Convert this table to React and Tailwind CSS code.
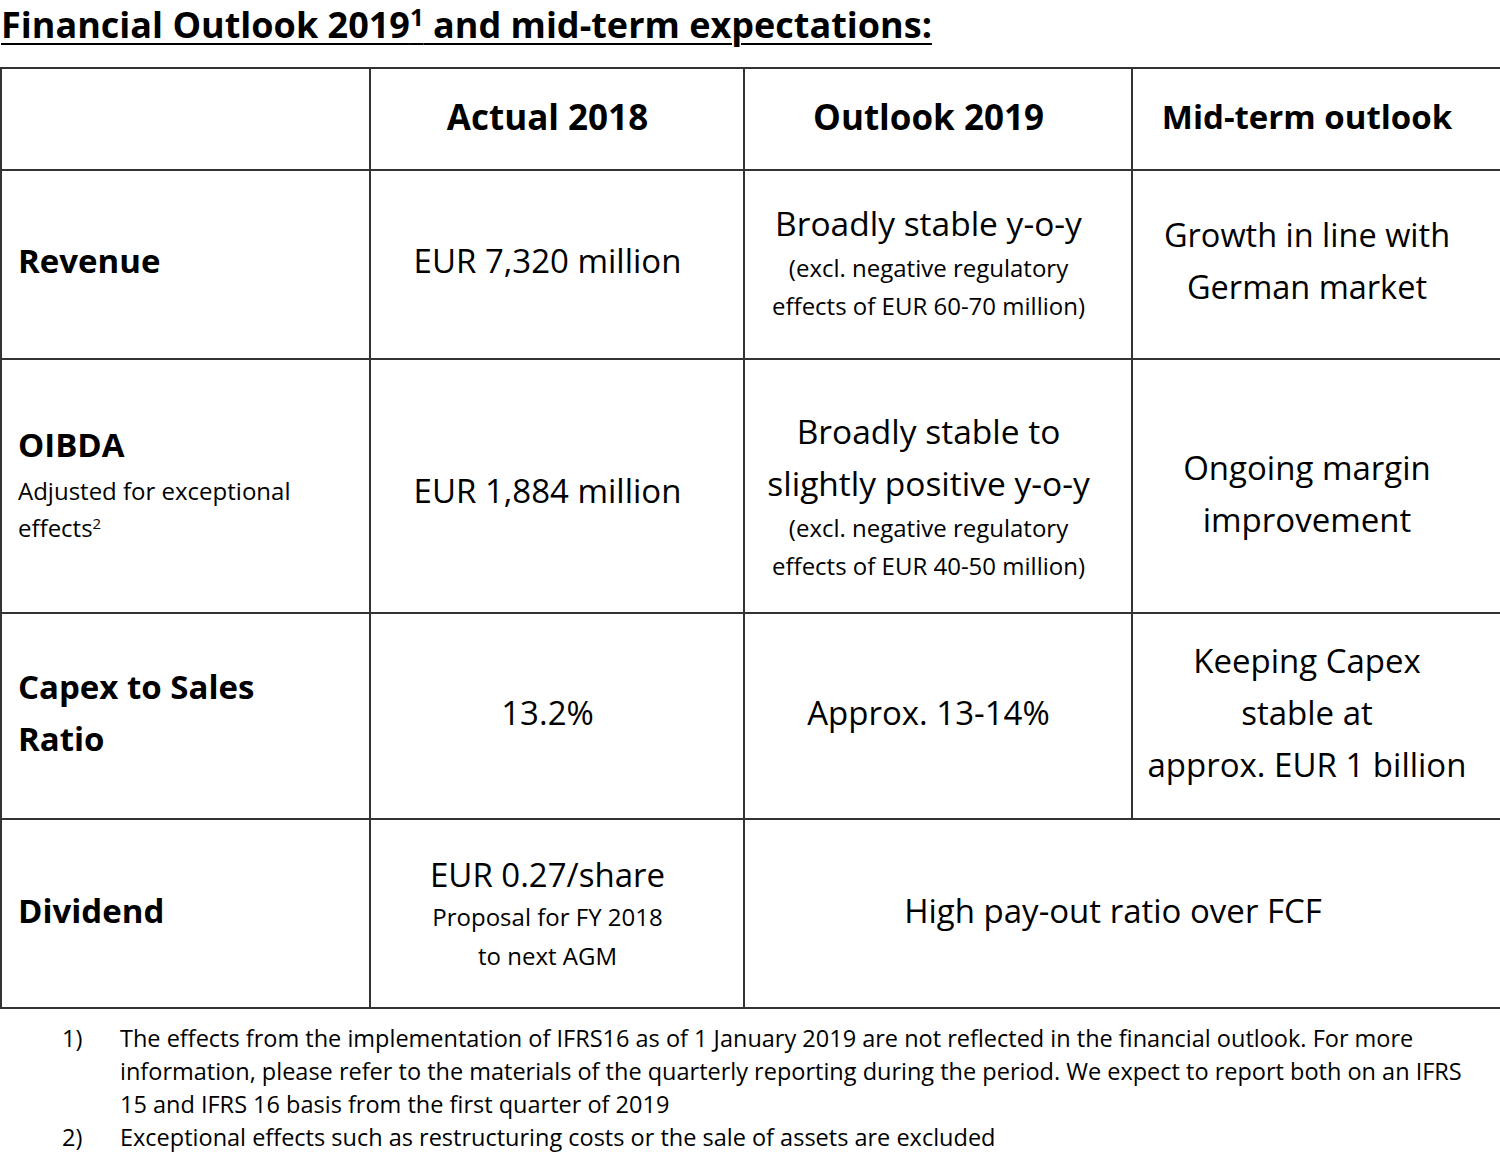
import React from "react";

const font = { fontFamily: '"Open Sans", "Liberation Sans", sans-serif' };

const B = "border-2 border-[#333]";
const C = "border-2 border-[#333] text-center pr-[19px]";

export default function App() {
  return (
    <div className="w-[1500px] h-[1154px] bg-white text-black relative" style={font}>
      <h1 className="text-[36px] font-bold leading-[44px] underline underline-offset-[5px] decoration-[2px] pl-[1px] pt-[3px] h-[67px]">
        Financial Outlook 2019<sup className="text-[24px]">1</sup> and mid-term expectations:
      </h1>
      <table className="w-[1500px] border-collapse table-fixed">
        <colgroup>
          <col className="w-[369px]" />
          <col className="w-[374px]" />
          <col className="w-[388px]" />
          <col className="w-[369px]" />
        </colgroup>
        <tbody>
          <tr className="h-[102px]">
            <td className={B}></td>
            <td className={`${C} text-[35px] font-bold pb-[4px]`}>Actual 2018</td>
            <td className={`${C} text-[35px] font-bold pb-[4px]`}>Outlook 2019</td>
            <td className={`${C} text-[33px] font-bold pb-[4px]`}>Mid-term outlook</td>
          </tr>
          <tr className="h-[189px]">
            <td className={`${B} pl-[16px] text-[33px] font-bold pb-[8px]`}>Revenue</td>
            <td className={`${C} text-[33px] pb-[8px]`}>EUR 7,320 million</td>
            <td className={`${C} pb-[8px]`}>
              <div className="text-[33.5px] leading-[52px]">Broadly stable y-o-y</div>
              <div className="text-[24px] leading-[38px]">(excl. negative regulatory</div>
              <div className="text-[24px] leading-[38px]">effects of EUR 60-70 million)</div>
            </td>
            <td className={`${C} text-[32.5px] leading-[52px] pb-[8px]`}>
              Growth in line with<br />German market
            </td>
          </tr>
          <tr className="h-[254px]">
            <td className={`${B} pl-[16px] pb-[10px]`}>
              <div className="text-[33px] font-bold leading-[55px]">OIBDA</div>
              <div className="text-[24px] leading-[37px]">Adjusted for exceptional</div>
              <div className="text-[24px] leading-[37px]">
                effects<sup className="text-[15px]">2</sup>
              </div>
            </td>
            <td className={`${C} text-[33px] pt-[10px]`}>EUR 1,884 million</td>
            <td className={`${C} pt-[18px]`}>
              <div className="text-[33.5px] leading-[52px]">Broadly stable to</div>
              <div className="text-[33.5px] leading-[52px]">slightly positive y-o-y</div>
              <div className="text-[24px] leading-[38px]">(excl. negative regulatory</div>
              <div className="text-[24px] leading-[38px]">effects of EUR 40-50 million)</div>
            </td>
            <td className={`${C} text-[33px] leading-[52px] pt-[16px]`}>
              Ongoing margin<br />improvement
            </td>
          </tr>
          <tr className="h-[206px]">
            <td className={`${B} pl-[16px] text-[33px] font-bold leading-[52px] pb-[6px]`}>
              Capex to Sales<br />Ratio
            </td>
            <td className={`${C} text-[33px] pb-[6px]`}>13.2%</td>
            <td className={`${C} text-[33px] pb-[6px]`}>Approx. 13-14%</td>
            <td className={`${C} text-[33px] leading-[52px] pb-[6px]`}>
              Keeping Capex<br />stable at<br />approx. EUR 1 billion
            </td>
          </tr>
          <tr className="h-[189px]">
            <td className={`${B} pl-[16px] text-[33px] font-bold pb-[6px]`}>Dividend</td>
            <td className={C}>
              <div className="text-[33px] leading-[44px]">EUR 0.27/share</div>
              <div className="text-[24px] leading-[39px]">Proposal for FY 2018</div>
              <div className="text-[24px] leading-[39px]">to next AGM</div>
            </td>
            <td colSpan={2} className={`${C} text-[33px] pb-[6px]`}>
              High pay-out ratio over FCF
            </td>
          </tr>
        </tbody>
      </table>
      <div className="text-[23.5px] leading-[33px] mt-[13px]">
        <div className="flex">
          <div className="w-[120px] pl-[62px] shrink-0">1)</div>
          <div className="w-[1358px]">
            The effects from the implementation of IFRS16 as of 1 January 2019 are not reflected in the financial outlook. For more information, please refer to the materials of the quarterly reporting during the period. We expect to report both on an IFRS 15 and IFRS 16 basis from the first quarter of 2019
          </div>
        </div>
        <div className="flex">
          <div className="w-[120px] pl-[62px] shrink-0">2)</div>
          <div>Exceptional effects such as restructuring costs or the sale of assets are excluded</div>
        </div>
      </div>
    </div>
  );
}
